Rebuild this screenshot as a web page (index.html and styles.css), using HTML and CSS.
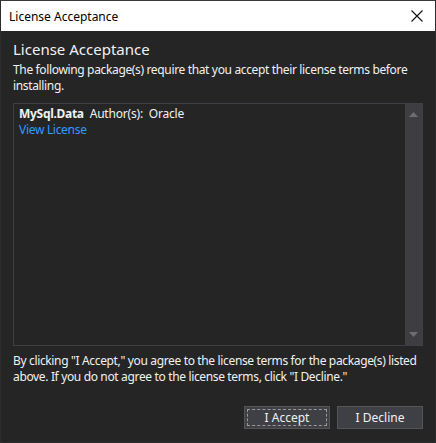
FILE: index.html
```html
<!DOCTYPE html>
<html>
<head>
<meta charset="utf-8">
<link rel="stylesheet" href="styles.css">
</head>
<body>
<div class="window">
  <div class="titlebar">
    <span class="title">License Acceptance</span>
    <svg class="close" width="12" height="12" viewBox="0 0 12 12"><path d="M0.5 0.5 L11.5 11.5 M11.5 0.5 L0.5 11.5" stroke="#111" stroke-width="1.1" fill="none"/></svg>
  </div>
  <div class="content">
    <h1 class="heading">License Acceptance</h1>
    <p class="intro">The following package(s) require that you accept their license terms before installing.</p>
    <div class="listbox">
      <div class="items">
        <div class="pkg"><span class="pkg-name">MySql.Data</span><span class="pkg-author">Author(s):&nbsp; Oracle</span></div>
        <a class="view-link">View License</a>
      </div>
      <div class="scrollbar">
        <svg class="arrow" width="9" height="5" viewBox="0 0 9 5"><path d="M0 5 L4.5 0 L9 5 Z" fill="#6e6e72"/></svg>
        <svg class="arrow" width="9" height="5" viewBox="0 0 9 5"><path d="M0 0 L4.5 5 L9 0 Z" fill="#6e6e72"/></svg>
      </div>
    </div>
    <p class="notice">By clicking "I Accept," you agree to the license terms for the package(s) listed above. If you do not agree to the license terms, click "I Decline."</p>
    <div class="buttons">
      <button class="btn btn-default"><span class="focus">I Accept</span></button>
      <button class="btn">I Decline</button>
    </div>
  </div>
</div>
</body>
</html>
```

FILE: styles.css
```css
html, body {
  margin: 0;
  padding: 0;
  background: #252526;
}
.window {
  width: 436px;
  height: 443px;
  box-sizing: border-box;
  border: 1px solid #2d2d2d;
  border-top-color: #3a3a3a;
  display: flex;
  flex-direction: column;
  font-family: "Noto Sans", "Open Sans", sans-serif;
  background: #252526;
  overflow: hidden;
}
.titlebar {
  height: 30px;
  background: #ffffff;
  display: flex;
  align-items: center;
  justify-content: space-between;
  padding: 0 12px 0 8px;
  flex: none;
}
.title {
  font-size: 12px;
  color: #000;
}
.close {
  display: block;
}
.content {
  flex: 1;
  display: flex;
  flex-direction: column;
  padding: 8px 12px 0 12px;
  color: #f1f1f1;
}
.heading {
  margin: 0;
  font-size: 15px;
  font-weight: normal;
  line-height: 20px;
  color: #f1f1f1;
}
.intro {
  margin: 3px 0 0 0;
  font-size: 12px;
  line-height: 16px;
  letter-spacing: -0.35px;
}
.listbox {
  margin-top: 9px;
  height: 243px;
  box-sizing: border-box;
  border: 1px solid #3f3f46;
  display: flex;
  background: #252526;
}
.items {
  flex: 1;
  padding: 2px 5px;
}
.pkg {
  font-size: 12px;
  line-height: 16px;
  display: flex;
  gap: 6px;
}
.pkg-name {
  font-weight: bold;
  letter-spacing: -0.3px;
}
.pkg-author {
  letter-spacing: -0.2px;
}
.view-link {
  display: block;
  font-size: 12px;
  line-height: 15px;
  color: #3399ff;
  letter-spacing: -0.3px;
}
.scrollbar {
  width: 17px;
  background: #3e3e42;
  display: flex;
  flex-direction: column;
  justify-content: space-between;
  align-items: center;
  padding: 8px 0 8px 0;
}
.arrow {
  display: block;
}
.notice {
  margin: 7px 0 0 0;
  font-size: 12px;
  line-height: 16px;
  letter-spacing: -0.35px;
}
.buttons {
  margin-top: 21px;
  display: flex;
  justify-content: flex-end;
  gap: 7px;
}
.btn {
  width: 86px;
  height: 23px;
  box-sizing: border-box;
  background: #3f3f46;
  border: 1px solid #555555;
  color: #f1f1f1;
  font-family: "Noto Sans", "Open Sans", sans-serif;
  font-size: 12px;
  padding: 2px;
  display: flex;
  align-items: center;
  justify-content: center;
}
.focus {
  flex: 1;
  align-self: stretch;
  display: flex;
  align-items: center;
  justify-content: center;
  border: 1px dashed #9a9a9a;
}
```
